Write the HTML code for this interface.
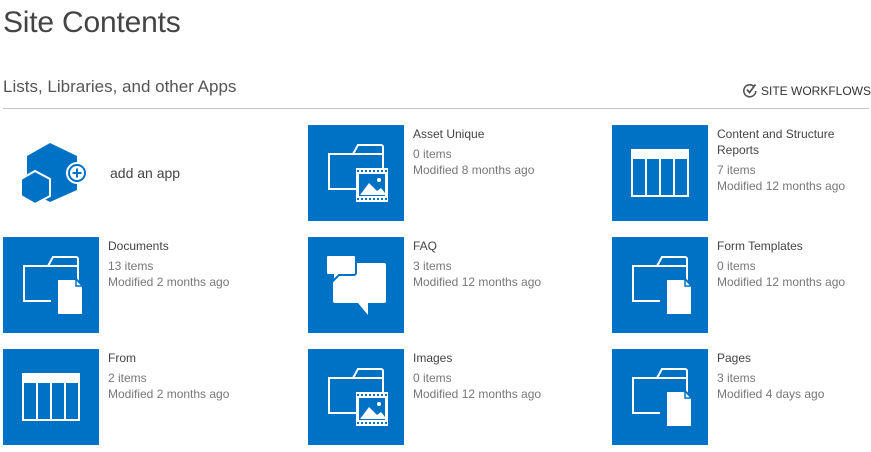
<!DOCTYPE html>
<html><head><meta charset="utf-8"><style>
body{margin:0;width:871px;height:452px;background:#fff;font-family:"Liberation Sans",sans-serif;position:relative;overflow:hidden;color:#444}
.a{position:absolute}
h1{position:absolute;left:3px;top:6px;margin:0;font-size:30px;font-weight:normal;color:#444;letter-spacing:-0.2px}
.sub{left:3px;top:77px;font-size:17px;color:#555}
.line{left:3px;top:108px;width:866px;height:1px;background:#c6c6c6}
.wf{left:742px;top:82px;font-size:12px;color:#333}
.tile{position:absolute;width:96px;height:96px;background:#0072c6}
.tile svg{width:96px;height:96px;display:block}
.t{position:absolute;font-size:12px;line-height:16px;color:#444;width:140px}
.t .m{color:#777;display:block;margin-top:4px}
</style></head><body>
<h1>Site Contents</h1>
<div class="a sub">Lists, Libraries, and other Apps</div>
<div class="a wf"><svg width="16" height="16" viewBox="0 0 16 16" style="vertical-align:-3px;margin-right:3px"><path d="M12 4.5A6 6 0 1 0 13.8 9" fill="none" stroke="#555" stroke-width="1.6"/><path d="M5 7.5l2.5 3L13.5 2.5" fill="none" stroke="#555" stroke-width="1.8"/></svg>SITE WORKFLOWS</div>
<div class="a line"></div>

<!-- add an app -->
<svg class="a" style="left:0;top:120px" width="100" height="100" viewBox="0 120 100 100">
<polygon points="50,143 77,156 77,190 50,202 27,190 27,156" fill="#0072c6"/>
<polygon points="35,171 50,179 50,196 35,204 21,196 21,179" fill="#0072c6" stroke="#fff" stroke-width="2"/>
<circle cx="77" cy="173" r="11" fill="#fff"/><circle cx="77" cy="173" r="9" fill="#0072c6"/><circle cx="77" cy="173" r="7" fill="#fff"/>
<path d="M77 168.5v9M72.5 173h9" stroke="#0072c6" stroke-width="2"/>
</svg>
<div class="t" style="left:110px;top:165px;font-size:14px;color:#444">add an app</div>

<svg width="0" height="0" style="position:absolute">
<defs>
<g id="folder"><path d="M48 64H21V29H45L50 20H73a2 2 0 0 1 2 2V63" fill="none" stroke="#fff" stroke-width="2"/><path d="M45 29H75" stroke="#fff" stroke-width="2"/></g>
<g id="doc"><path d="M54 42h19l7 7v29H54z" fill="#fff" stroke="#0072c6" stroke-width="2"/><path d="M73 42v7h7" fill="none" stroke="#0072c6" stroke-width="1.5"/></g>
<g id="img"><rect x="48" y="43" width="32" height="34" fill="#fff"/><rect x="51" y="49" width="26" height="22" fill="#0072c6"/><path d="M52 70l9-12 8 8 4-3 4 5v2z" fill="#fff"/><circle cx="71" cy="55" r="2" fill="#fff"/><path d="M49 46h30M49 74h30" stroke="#0072c6" stroke-width="2" stroke-dasharray="2 2"/></g>
<g id="list"><rect x="19" y="24" width="58" height="48" fill="#fff"/><rect x="21" y="34" width="12" height="36" fill="#0072c6"/><rect x="35" y="34" width="12" height="36" fill="#0072c6"/><rect x="49" y="34" width="12" height="36" fill="#0072c6"/><rect x="63" y="34" width="12" height="36" fill="#0072c6"/></g>
<g id="faq"><path d="M26 26h50a2 2 0 0 1 2 2v36a2 2 0 0 1-2 2H60v12l-10-12H27a2 2 0 0 1-2-2V28z" fill="#fff"/><path d="M20 18h26a2 2 0 0 1 2 2v16a2 2 0 0 1-2 2H31l-6 6v-6h-5a2 2 0 0 1-2-2V20a2 2 0 0 1 2-2z" fill="#fff" stroke="#0072c6" stroke-width="2"/></g>
</defs></svg>

<div class="tile" style="left:308px;top:125px"><svg viewBox="0 0 96 96"><use href="#folder"/><use href="#img"/></svg></div>
<div class="t" style="left:413px;top:126px">Asset Unique<span class="m">0 items<br>Modified 8 months ago</span></div>
<div class="tile" style="left:612px;top:125px"><svg viewBox="0 0 96 96"><use href="#list"/></svg></div>
<div class="t" style="left:717px;top:126px;width:135px">Content and Structure Reports<span class="m">7 items<br>Modified 12 months ago</span></div>

<div class="tile" style="left:3px;top:237px"><svg viewBox="0 0 96 96"><use href="#folder"/><use href="#doc"/></svg></div>
<div class="t" style="left:108px;top:238px">Documents<span class="m">13 items<br>Modified 2 months ago</span></div>
<div class="tile" style="left:308px;top:237px"><svg viewBox="0 0 96 96"><use href="#faq"/></svg></div>
<div class="t" style="left:413px;top:238px">FAQ<span class="m">3 items<br>Modified 12 months ago</span></div>
<div class="tile" style="left:612px;top:237px"><svg viewBox="0 0 96 96"><use href="#folder"/><use href="#doc"/></svg></div>
<div class="t" style="left:717px;top:238px">Form Templates<span class="m">0 items<br>Modified 12 months ago</span></div>

<div class="tile" style="left:3px;top:349px"><svg viewBox="0 0 96 96"><use href="#list"/></svg></div>
<div class="t" style="left:108px;top:350px">From<span class="m">2 items<br>Modified 2 months ago</span></div>
<div class="tile" style="left:308px;top:349px"><svg viewBox="0 0 96 96"><use href="#folder"/><use href="#img"/></svg></div>
<div class="t" style="left:413px;top:350px">Images<span class="m">0 items<br>Modified 12 months ago</span></div>
<div class="tile" style="left:612px;top:349px"><svg viewBox="0 0 96 96"><use href="#folder"/><use href="#doc"/></svg></div>
<div class="t" style="left:717px;top:350px">Pages<span class="m">3 items<br>Modified 4 days ago</span></div>
</body></html>
